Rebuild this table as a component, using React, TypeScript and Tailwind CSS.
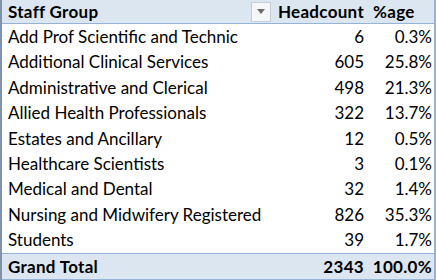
const rows: [string, number, string][] = [
  ["Add Prof Scientific and Technic", 6, "0.3%"],
  ["Additional Clinical Services", 605, "25.8%"],
  ["Administrative and Clerical", 498, "21.3%"],
  ["Allied Health Professionals", 322, "13.7%"],
  ["Estates and Ancillary", 12, "0.5%"],
  ["Healthcare Scientists", 3, "0.1%"],
  ["Medical and Dental", 32, "1.4%"],
  ["Nursing and Midwifery Registered", 826, "35.3%"],
  ["Students", 39, "1.7%"],
];

export default function App() {
  return (
    <div className="flex h-[280px] w-[436px] bg-white font-['Lato','Noto_Sans',sans-serif] text-[17px] text-black">
      <div className="w-[2px] bg-[#8193ab]" />
      <div className="flex flex-1 flex-col border-r-2 border-b-2 border-[#95b3d7]">
        <div className="flex h-[24px] items-center border-b border-[#95b3d7] bg-[#dce6f1] font-bold tracking-[0.3px]">
          <div className="flex flex-1 items-center justify-between pl-[6px]">
            <span>Staff Group</span>
            <div className="mr-[2px] flex h-[20px] w-[20px] items-center justify-center border border-[#c5cdd8] bg-[#f4f6f9]">
              <svg width="8" height="5" viewBox="0 0 8 5">
                <path d="M0 0h8L4 5z" fill="#6b6b6b" />
              </svg>
            </div>
          </div>
          <div className="w-[93px] pr-[2px] text-right">Headcount</div>
          <div className="w-[68px] pl-[7px] text-left">%age</div>
        </div>
        {rows.map(([name, count, pct]) => (
          <div key={name} className="flex h-[25.4px] items-center">
            <div className="flex-1 pl-[6px]">{name}</div>
            <div className="w-[93px] pr-[2px] text-right">{count}</div>
            <div className="w-[68px] pr-[2px] text-right">{pct}</div>
          </div>
        ))}
        <div className="flex flex-1 items-center border-t border-[#95b3d7] bg-[#dce6f1] font-bold tracking-[0.3px]">
          <div className="flex-1 pl-[6px]">Grand Total</div>
          <div className="w-[93px] pr-[2px] text-right">2343</div>
          <div className="w-[68px] pr-[2px] text-right">100.0%</div>
        </div>
      </div>
    </div>
  );
}
